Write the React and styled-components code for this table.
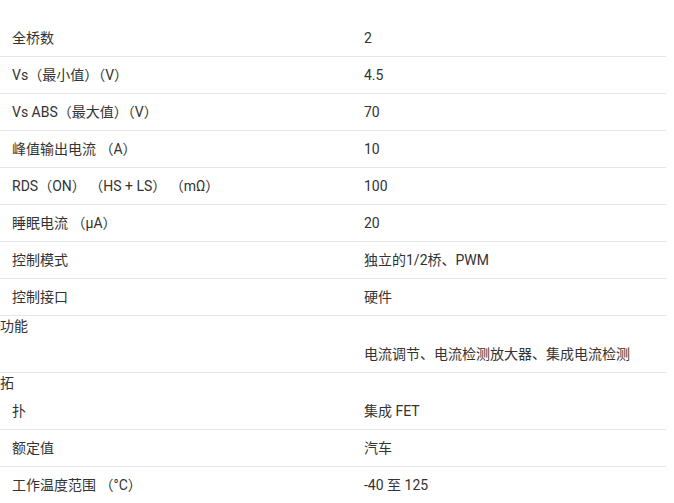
import React from 'react'
import styled, { createGlobalStyle } from 'styled-components'

const GlobalStyle = createGlobalStyle`
body {
  margin: 0;
  background: #fff;
  font-family: Roboto, "Noto Sans CJK SC", sans-serif;
  font-size: 14px;
  color: #333;
}
`

const Table = styled.div`
width: 666px;
padding-top: 20px;
`

const Group = styled.div`
border-bottom: ${p => (p.last ? 'none' : '1px solid #e5e5e5')};
`

const Stray = styled.div`
line-height: 20px;
height: 20px;
`

const Row = styled.div`
display: grid;
grid-template-columns: 352px 1fr;
align-items: center;
min-height: 36px;
`

const Cell = styled.div`
padding: 0 12px;
line-height: 20px;
white-space: pre;
`

const rows = [
  { label: '全桥数', value: '2' },
  { label: 'Vs（最小值）（V）', value: '4.5' },
  { label: 'Vs ABS（最大值）（V）', value: '70' },
  { label: '峰值输出电流 （A）', value: '10' },
  { label: 'RDS（ON） （HS + LS） （mΩ）', value: '100' },
  { label: '睡眠电流 （μA）', value: '20' },
  { label: '控制模式', value: '独立的1/2桥、PWM' },
  { label: '控制接口', value: '硬件' },
  { stray: '功能', label: '', value: '电流调节、电流检测放大器、集成电流检测' },
  { stray: '拓', label: '扑', value: '集成 FET' },
  { label: '额定值', value: '汽车' },
  { label: '工作温度范围 （°C）', value: '-40 至 125' },
]

export default function App() {
  return (
    <>
      <GlobalStyle />
      <Table>
        {rows.map((r, i) => (
          <Group key={i} last={i === rows.length - 1}>
            {r.stray && <Stray>{r.stray}</Stray>}
            <Row>
              <Cell>{r.label}</Cell>
              <Cell>{r.value}</Cell>
            </Row>
          </Group>
        ))}
      </Table>
    </>
  )
}
